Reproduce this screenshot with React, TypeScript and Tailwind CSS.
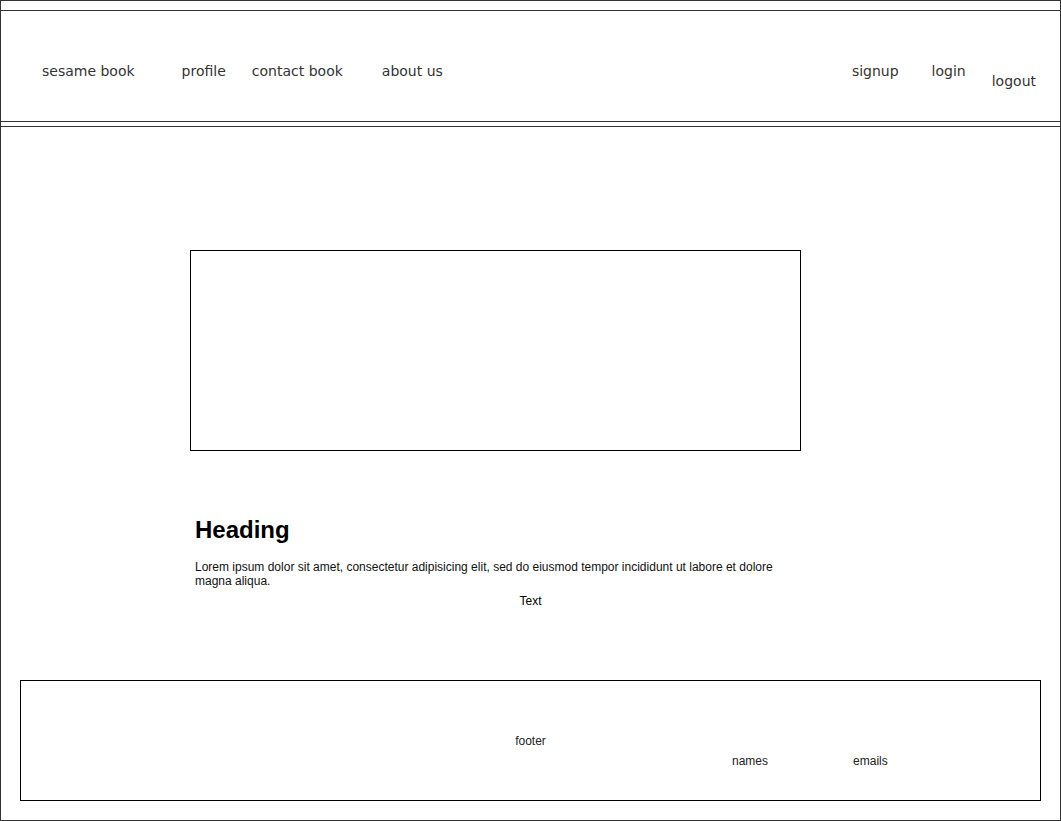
import React from "react";

const navLeft = [
  { label: "sesame book", cls: "ml-[41px]" },
  { label: "profile", cls: "ml-[47px]" },
  { label: "contact book", cls: "ml-[26px]" },
  { label: "about us", cls: "ml-[39px]" },
];

export default function App() {
  return (
    <div className="w-[1061px] h-[821px] bg-white border border-[#333] overflow-hidden font-['Liberation_Sans',Arial,sans-serif]">
      {/* Header */}
      <div className="mt-[9px] border-t border-[#333]" />
      <header className="h-[111px] border-b border-[#333] flex items-start pt-[50px] text-[14px] leading-[20px] text-[#333] font-['DejaVu_Sans',Verdana,sans-serif]">
        {navLeft.map((n) => (
          <span key={n.label} className={n.cls}>
            {n.label}
          </span>
        ))}
        <span className="ml-auto">signup</span>
        <span className="ml-[33px]">login</span>
        <span className="ml-[26px] mr-[24px] mt-[10px]">logout</span>
      </header>
      <div className="mt-[4px] border-t border-[#333]" />

      {/* Main */}
      <main className="pt-[123px]">
        <div className="ml-[189px] w-[611px] h-[201px] border border-black" />
        <div className="ml-[194px] w-[600px] mt-[65px]">
          <h1 className="text-[24px] leading-[28px] font-bold text-black">Heading</h1>
          <p className="mt-[16px] text-[12px] leading-[14px] text-[#111]">
            Lorem ipsum dolor sit amet, consectetur adipisicing elit, sed do eiusmod tempor incididunt ut labore et dolore magna aliqua.
          </p>
        </div>
        <div className="mt-[6px] text-center text-[12px] leading-[14px] text-black">Text</div>
      </main>

      {/* Footer */}
      <footer className="mt-[72px] ml-[19px] w-[1021px] h-[121px] border border-black text-[12px] leading-[14px] text-[#222] flex flex-col">
        <div className="mt-[53px] text-center">footer</div>
        <div className="mt-[6px] flex">
          <span className="ml-[711px]">names</span>
          <span className="ml-[85px]">emails</span>
        </div>
      </footer>
    </div>
  );
}
